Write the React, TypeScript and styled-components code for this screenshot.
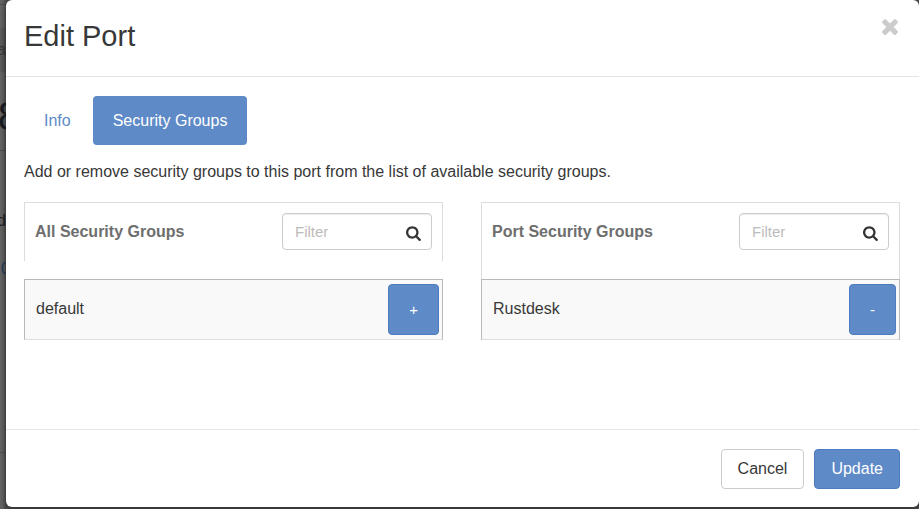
import React, { useState } from "react";
import styled, { createGlobalStyle, css } from "styled-components";

const GlobalStyle = createGlobalStyle`
  *, *::before, *::after { box-sizing: border-box; }
  body {
    margin: 0;
    background: #5c5c5c;
    color: #383838;
    font: 16px/22px "Liberation Sans", Arial, sans-serif;
  }
  button, input { font: inherit; }
`;

const blue = "#5e8ac7";
const blueEdge = "#4b7cc0";

const Screen = styled.div`
  display: grid;
  grid-template-columns: 6px minmax(0, 1fr);
  min-height: 100vh;
  background: #4d4d4f;
`;

const Underlay = styled.div`
  display: flex;
  flex-direction: column;
  align-items: flex-end;
  min-width: 0;
  overflow: hidden;
  background: linear-gradient(90deg, #666 0, #626262 50%, #4c4c4c 100%);
  color: #1c1d22;
`;

const Strip = styled.div<{ $height: number; $shade?: boolean; $line?: boolean }>`
  flex: none;
  display: flex;
  align-items: center;
  justify-content: flex-end;
  width: 100%;
  height: ${(p) => p.$height}px;
  ${(p) => p.$shade && "background: rgba(0, 0, 0, 0.08);"}
  ${(p) => p.$line && "border-bottom: 1px solid rgba(0, 0, 0, 0.2);"}
`;

const Peek = styled.span<{ $kind?: "heading" | "link" | "muted" }>`
  flex: none;
  ${(p) => p.$kind === "muted" && "color: #393939;"}
  ${(p) => p.$kind === "heading" && "font-size: 40px; line-height: 44px; margin-right: -14px;"}
  ${(p) => p.$kind === "link" && "color: #26375c; margin-right: -4px;"}
`;

const Dialog = styled.div`
  align-self: start;
  background: #fff;
  border-radius: 6px;
  box-shadow: 0 3px 9px rgba(0, 0, 0, 0.4);
`;

const Header = styled.header`
  display: flex;
  align-items: flex-start;
  justify-content: space-between;
  padding: 15px 17px 19px 18px;
  border-bottom: 1px solid #e5e5e5;
`;

const Title = styled.h1`
  margin: 0;
  font-size: 29px;
  font-weight: 400;
  line-height: 42px;
`;

const CloseButton = styled.button`
  display: flex;
  padding: 0;
  border: 0;
  background: none;
  color: #ccc;
  cursor: pointer;
`;

const Body = styled.div`
  min-height: 352px;
  padding: 19px 19px 20px 18px;
`;

const Tabs = styled.div`
  display: flex;
  gap: 2px;
`;

const Tab = styled.button<{ $active: boolean }>`
  height: 49px;
  padding: 0 20px;
  border: 0;
  border-radius: 4px;
  background: ${(p) => (p.$active ? blue : "transparent")};
  color: ${(p) => (p.$active ? "#fff" : blue)};
  cursor: pointer;
`;

const Description = styled.p`
  margin: 16px 0 19px;
`;

const Columns = styled.div`
  display: grid;
  grid-template-columns: 1fr 1fr;
  gap: 38px;
`;

const PanelHead = styled.div<{ $detached: boolean }>`
  display: flex;
  align-items: flex-start;
  justify-content: space-between;
  height: ${(p) => (p.$detached ? 59 : 77)}px;
  margin-bottom: ${(p) => (p.$detached ? 18 : 0)}px;
  padding: 10px 10px 0;
  border: 1px solid #ddd;
  border-bottom: 0;
`;

const PanelTitle = styled.h2`
  margin: 0;
  color: #6e6e6e;
  font-size: 16px;
  font-weight: 700;
  line-height: 38px;
`;

const FilterBox = styled.label`
  display: flex;
  align-items: center;
  width: 150px;
  height: 37px;
  padding: 0 9px 0 12px;
  border: 1px solid #ccc;
  border-radius: 4px;
  box-shadow: inset 0 1px 1px rgba(0, 0, 0, 0.075);
  svg { flex: none; margin-top: 3px; }
`;

const FilterInput = styled.input`
  flex: 1;
  min-width: 0;
  padding: 0;
  border: 0;
  outline: 0;
  background: none;
  color: #333;
  font-size: 15px;
  &::placeholder { color: #bbb; opacity: 1; }
`;

const GroupList = styled.ul`
  margin: 0;
  padding: 0;
  list-style: none;
`;

const GroupRow = styled.li`
  display: flex;
  align-items: center;
  justify-content: space-between;
  height: 61px;
  padding: 0 3px 0 11px;
  border: 1px solid #b8b8b8;
  border-bottom-color: #ddd;
  background: #f9f9f9;
`;

const GroupName = styled.span`
  padding-bottom: 2px;
`;

const Button = styled.button<{ $primary?: boolean; $square?: boolean }>`
  height: 40px;
  padding: 0 15px;
  border: 1px solid #ccc;
  border-radius: 4px;
  background: #fff;
  color: #383838;
  cursor: pointer;
  ${(p) => p.$primary && css`
    border-color: ${blueEdge};
    background: ${blue};
    color: #fff;
  `}
  ${(p) => p.$square && css`
    height: 51px;
    padding: 0 20px;
    font-size: 15px;
  `}
`;

const Footer = styled.footer`
  display: flex;
  justify-content: flex-end;
  gap: 10px;
  padding: 19px 19px 18px;
  border-top: 1px solid #e5e5e5;
  ${Button} { padding: 0 16px; }
`;

const CloseIcon = () => (
  <svg width="24" height="24" viewBox="0 60 1792 1792" fill="currentColor" aria-hidden="true">
    <path d="M1490 1322q0 40-28 68l-136 136q-28 28-68 28t-68-28l-294-294-294 294q-28 28-68 28t-68-28l-136-136q-28-28-28-68t28-68l294-294-294-294q-28-28-28-68t28-68l136-136q28-28 68-28t68 28l294 294 294-294q28-28 68-28t68 28l136 136q28 28 28 68t-28 68l-294 294 294 294q28 28 28 68z" />
  </svg>
);

const SearchIcon = () => (
  <svg width="16" height="16" viewBox="0 0 1792 1792" fill="#333" aria-hidden="true">
    <path d="M1152 832q0-185-131.5-316.5t-316.5-131.5-316.5 131.5-131.5 316.5 131.5 316.5 316.5 131.5 316.5-131.5 131.5-316.5zm512 832q0 52-38 90t-90 38q-54 0-90-38l-343-342q-179 124-399 124-143 0-273.5-55.5t-225-150-150-225-55.5-273.5 55.5-273.5 150-225 225-150 273.5-55.5 273.5 55.5 225 150 150 225 55.5 273.5q0 220-124 399l343 343q37 37 37 90z" />
  </svg>
);

interface PanelProps {
  title: string;
  groups: string[];
  action: string;
  actionLabel: string;
  detached?: boolean;
}

function GroupPanel({ title, groups, action, actionLabel, detached = false }: PanelProps) {
  const [filter, setFilter] = useState("");
  const shown = groups.filter((g) => g.toLowerCase().includes(filter.toLowerCase()));
  return (
    <section>
      <PanelHead $detached={detached}>
        <PanelTitle>{title}</PanelTitle>
        <FilterBox>
          <FilterInput
            placeholder="Filter"
            aria-label={`Filter ${title}`}
            value={filter}
            onChange={(e) => setFilter(e.target.value)}
          />
          <SearchIcon />
        </FilterBox>
      </PanelHead>
      <GroupList>
        {shown.map((group) => (
          <GroupRow key={group}>
            <GroupName>{group}</GroupName>
            <Button type="button" $primary $square aria-label={`${actionLabel} ${group}`}>
              {action}
            </Button>
          </GroupRow>
        ))}
      </GroupList>
    </section>
  );
}

export default function App() {
  const [tab, setTab] = useState("Security Groups");
  return (
    <>
      <GlobalStyle />
      <Screen>
        <Underlay aria-hidden="true">
          <Strip $height={5} $line />
          <Strip $height={23} />
          <Strip $height={44} $shade><Peek $kind="muted">a</Peek></Strip>
          <Strip $height={9} />
          <Strip $height={70} $line><Peek $kind="heading">8</Peek></Strip>
          <Strip $height={46} />
          <Strip $height={48}><Peek>d</Peek></Strip>
          <Strip $height={48}><Peek $kind="link">0</Peek></Strip>
          <Strip $height={160} $line />
        </Underlay>
        <Dialog role="dialog" aria-labelledby="dialog-title">
          <Header>
            <Title id="dialog-title">Edit Port</Title>
            <CloseButton type="button" aria-label="Close"><CloseIcon /></CloseButton>
          </Header>
          <Body>
            <Tabs role="tablist">
              {["Info", "Security Groups"].map((name) => (
                <Tab
                  key={name}
                  type="button"
                  role="tab"
                  aria-selected={tab === name}
                  $active={tab === name}
                  onClick={() => setTab(name)}
                >
                  {name}
                </Tab>
              ))}
            </Tabs>
            <Description>
              Add or remove security groups to this port from the list of available security groups.
            </Description>
            <Columns>
              <GroupPanel title="All Security Groups" groups={["default"]} action="+" actionLabel="Add" detached />
              <GroupPanel title="Port Security Groups" groups={["Rustdesk"]} action="-" actionLabel="Remove" />
            </Columns>
          </Body>
          <Footer>
            <Button type="button">Cancel</Button>
            <Button type="button" $primary>Update</Button>
          </Footer>
        </Dialog>
      </Screen>
    </>
  );
}
